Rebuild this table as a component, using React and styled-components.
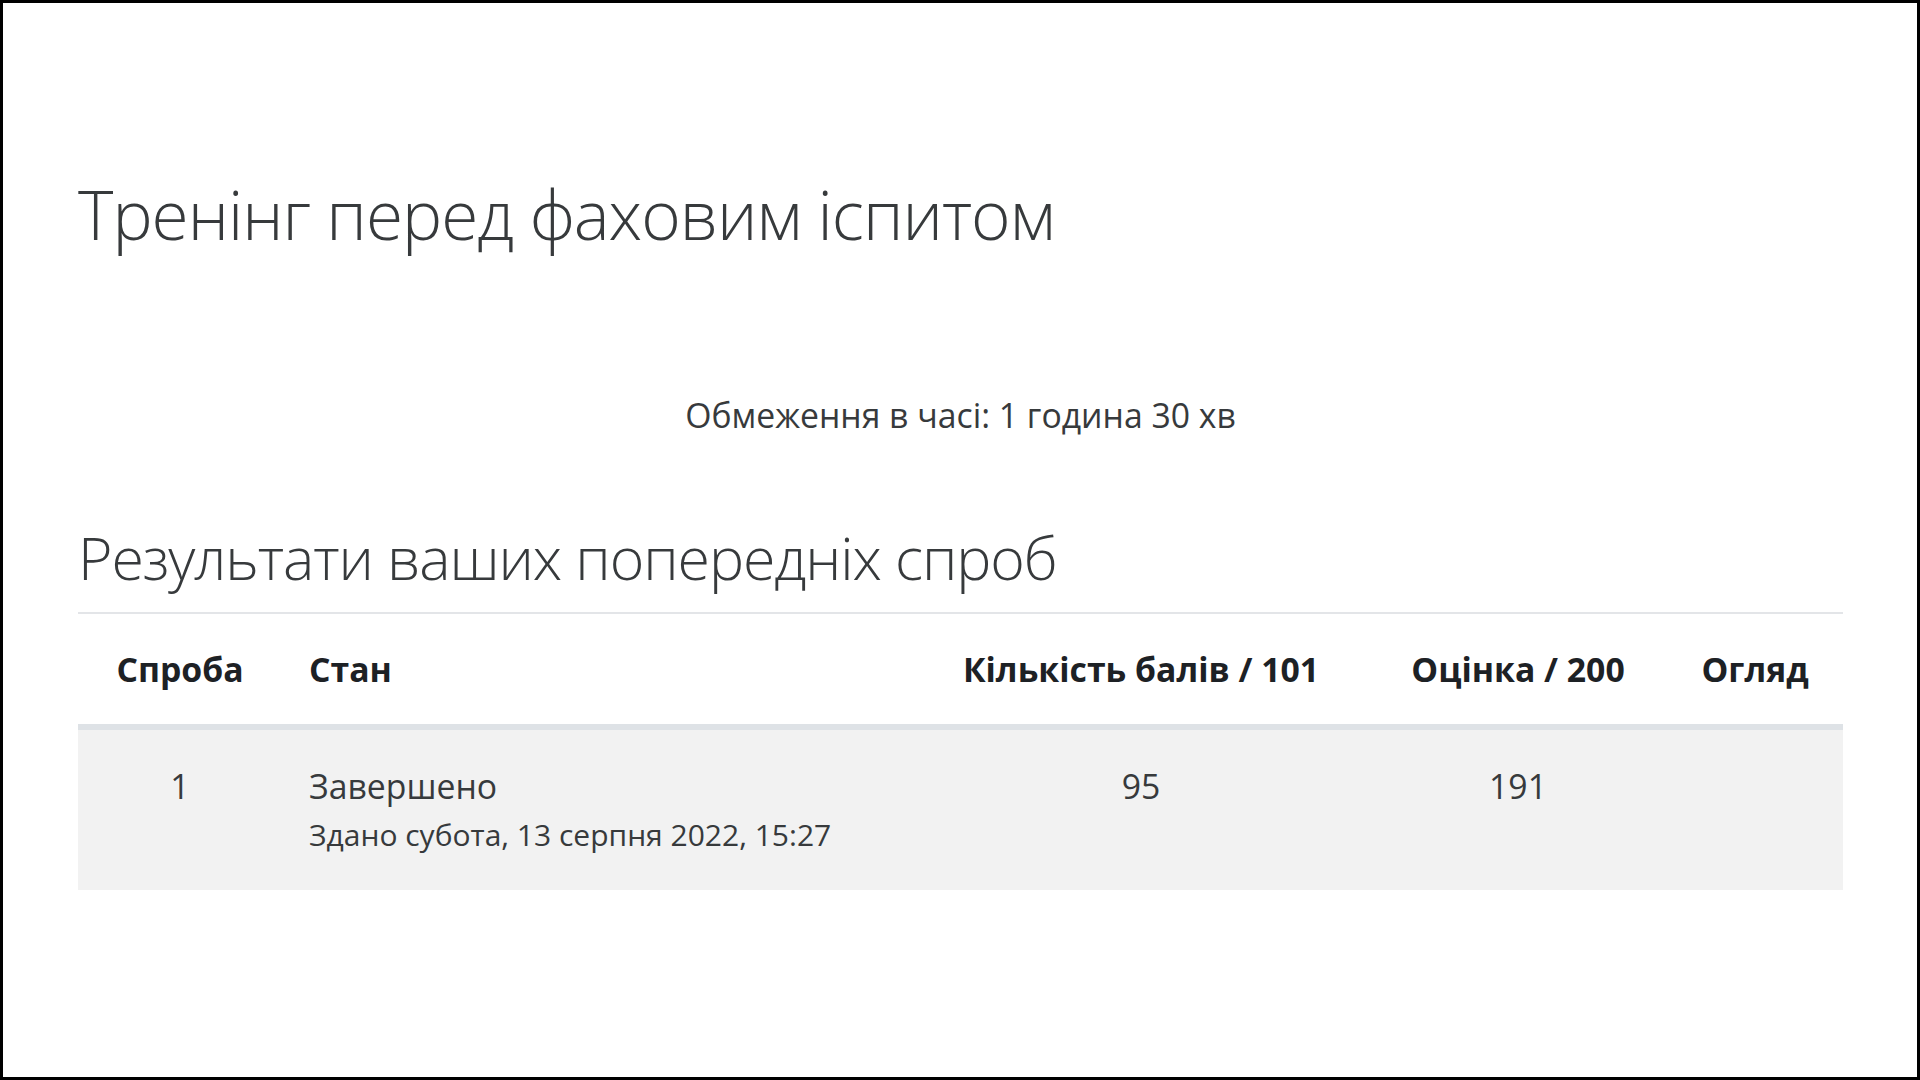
import React from 'react'
import styled, { createGlobalStyle } from 'styled-components'

const GlobalStyle = createGlobalStyle`
  html, body {
    margin: 0;
    padding: 0;
    background: #fff;
  }
  body {
    font-family: "Open Sans", "Noto Sans", sans-serif;
    color: #373a3c;
  }
  * { box-sizing: border-box; }
`

const attempts = [
  {
    id: 1,
    state: 'Завершено',
    submitted: 'Здано субота, 13 серпня 2022, 15:27',
    marks: '95',
    grade: '191',
  },
]

const Frame = styled.div`
  width: 1920px;
  height: 1080px;
  border: 3px solid #000;
  padding: 171px 74px 0 75px;
  overflow: hidden;
`

const Title = styled.h2`
  margin: 0;
  font-size: 67.5px;
  font-weight: 300;
  line-height: 1.2;
  letter-spacing: -1px;
  color: #373a3c;
`

const Limit = styled.p`
  margin: 135px 0 0;
  text-align: center;
  font-size: 33.75px;
  line-height: 1.5;
`

const Subtitle = styled.h3`
  margin: 81px 0 20px;
  font-size: 59px;
  font-weight: 300;
  line-height: 1.2;
  letter-spacing: -1.1px;
  color: #373a3c;
`

const Table = styled.table`
  width: 100%;
  border-collapse: collapse;
  table-layout: fixed;
  border-top: 2px solid #e3e5e8;
  font-size: 33.75px;
  line-height: 1.5;
`

const Head = styled.th`
  width: ${p => p.$w}px;
  padding: 30px 27px 29px;
  text-align: ${p => p.$align || 'center'};
  font-weight: 700;
  color: #1d2125;
  border-bottom: 6px solid #dee2e6;
  white-space: nowrap;
`

const Row = styled.tr`
  background: #f2f2f2;
`

const Cell = styled.td`
  padding: 31px 27px 33px;
  vertical-align: top;
  text-align: ${p => p.$align || 'center'};
`

const Submitted = styled.div`
  font-size: 30px;
  line-height: 1.5;
  white-space: nowrap;
`

export default function App() {
  return (
    <>
      <GlobalStyle />
      <Frame>
        <Title>Тренінг перед фаховим іспитом</Title>
        <Limit>Обмеження в часі: 1 година 30 хв</Limit>
        <Subtitle>Результати ваших попередніх спроб</Subtitle>
        <Table>
          <thead>
            <tr>
              <Head $w={204}>Спроба</Head>
              <Head $w={631} $align="left">Стан</Head>
              <Head $w={456}>Кількість балів / 101</Head>
              <Head $w={298}>Оцінка / 200</Head>
              <Head $w={176}>Огляд</Head>
            </tr>
          </thead>
          <tbody>
            {attempts.map(a => (
              <Row key={a.id}>
                <Cell>{a.id}</Cell>
                <Cell $align="left">
                  {a.state}
                  <Submitted>{a.submitted}</Submitted>
                </Cell>
                <Cell>{a.marks}</Cell>
                <Cell>{a.grade}</Cell>
                <Cell />
              </Row>
            ))}
          </tbody>
        </Table>
      </Frame>
    </>
  )
}
